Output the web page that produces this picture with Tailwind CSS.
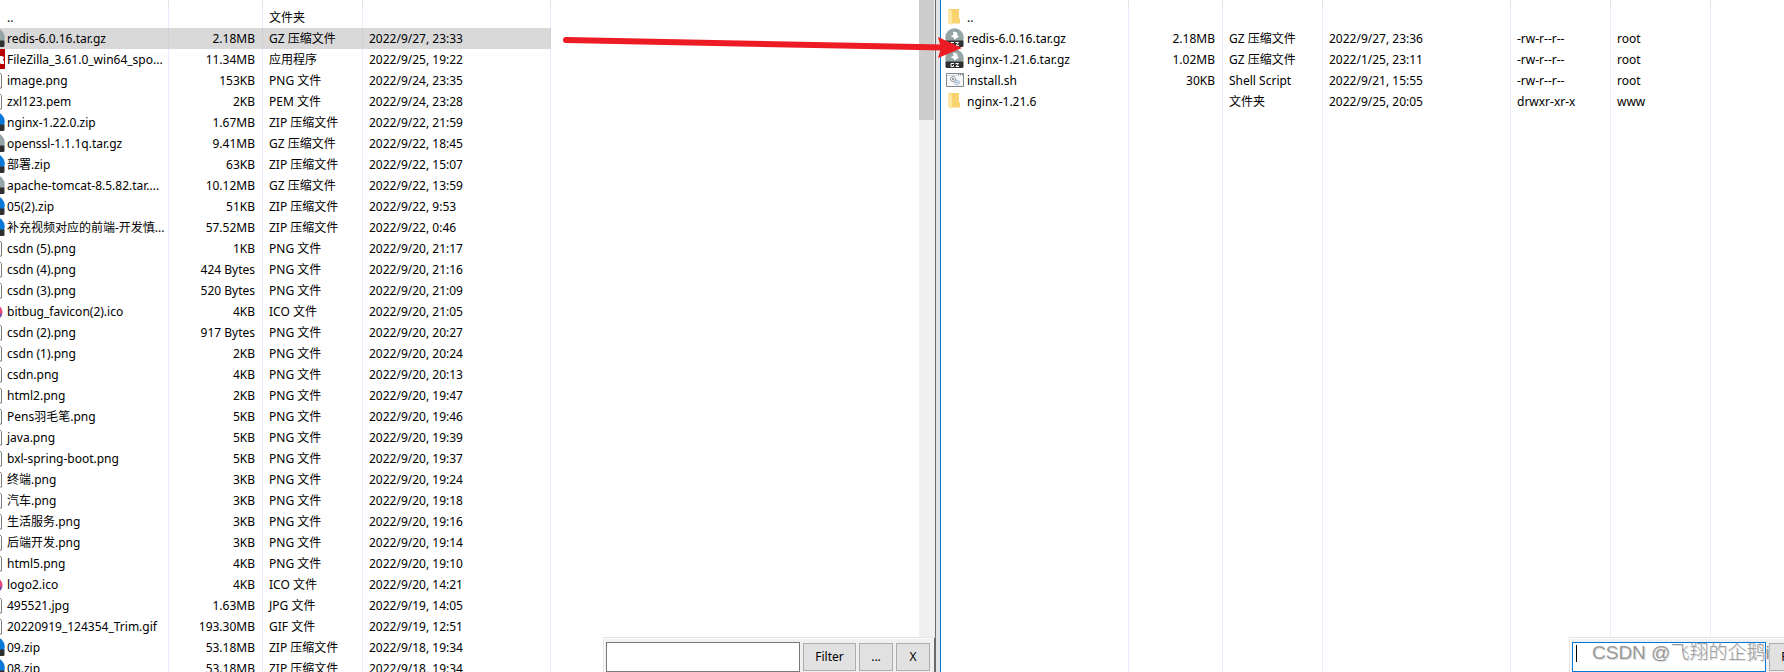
<!DOCTYPE html>
<html lang="zh-CN">
<head>
<meta charset="utf-8">
<title>File transfer</title>
<script src="https://cdn.jsdelivr.net/npm/@tailwindcss/browser@4"></script>
</head>
<body class="relative flex h-screen overflow-hidden bg-white font-['Noto_Sans','Noto_Sans_CJK_SC',sans-serif] text-xs text-black">

<svg class="hidden" aria-hidden="true">
  <symbol id="gz" viewBox="0 0 19 21"><circle cx="9.500" cy="9.500" r="9.300" fill="#95a5a5"/><path d="M8 3.500l4 1 .5 3 1.500 1-4.500 3-1-2-3-1.500 3-1z" fill="#fff"/><path d="M.5 12.500h18v5q0 1.500-1.500 1.500H2q-1.500 0-1.500-1.500z" fill="#303030"/><path d="M9 14.500H6v3h2.500v-1.500M10.500 14.500H13.500l-2.500 3h3" fill="none" stroke="#fff"/></symbol>
  <symbol id="zip" viewBox="0 0 19 21"><circle cx="9.500" cy="9.500" r="9.300" fill="#0a78d7"/><path d="M.5 12.500h18v5q0 1.500-1.500 1.500H2q-1.500 0-1.500-1.500z" fill="#303030"/></symbol>
  <symbol id="fz" viewBox="0 0 19 21"><path d="M0 0h19v20H0z" fill="#b80000"/><path d="M12 7h4l2 1-1 3 1 1v3h-3l-3-2z" fill="#fff"/></symbol>
  <symbol id="doc" viewBox="0 0 19 21"><path d="M4.500 2.500h9l2 2v13.500h-11z" fill="#fff" stroke="#7d7d7d"/></symbol>
  <symbol id="ico" viewBox="0 0 19 21"><circle cx="9" cy="11" r="7.500" fill="#e8487a"/><path d="M9 18.500a7.500 7.500 0 0 0 7.300-6L9 13z" fill="#6a4fb0"/></symbol>
  <symbol id="folder" viewBox="0 0 19 21"><path d="M4 2h10v9l1 1v4.500H4z" fill="#f8d36f"/><path d="M3 2l4 2v14l-4-2z" fill="#ffe9a2"/></symbol>
  <symbol id="script" viewBox="0 0 19 21"><path d="M1.500 3.500h17v13h-17z" fill="#f7f7f7" stroke="#7f878c"/><path d="M2 5.500h16" stroke="#d5d9dc"/><path d="M13 4.500h1M15 4.500h1M17 4.500h1" stroke="#7f878c"/><g fill="none" stroke="#7b7b7b"><circle cx="8" cy="9" r="2.500" stroke-dasharray="1.500 .5"/><circle cx="8" cy="9" r=".7"/></g><g fill="none" stroke="#7ea3c4"><circle cx="12" cy="12.500" r="2.300" stroke-dasharray="1.500 .5"/><circle cx="12" cy="12.500" r=".6"/></g></symbol>
</svg>

<section aria-label="Local files" class="relative flex w-[940px] shrink-0 overflow-hidden">
  <div class="min-w-0 flex-1 overflow-hidden">
    <table class="w-[551px] table-fixed border-separate border-spacing-0 whitespace-nowrap [&_td]:h-[21px] [&_td]:border-r [&_td]:border-[#e6effb] [&_td]:p-0 [&_td]:pl-[6px] [&_td]:leading-5 [&_td:first-child]:pl-[7px] [&_td:nth-child(2)]:pr-[7px] [&_td:nth-child(2)]:text-right [&_th]:h-[7px] [&_th]:border-r [&_th]:border-[#e2e2e2] [&_th]:p-0 [&_td]:relative [&_svg]:absolute [&_svg]:left-0 [&_svg]:top-0 [&_svg]:h-[21px] [&_svg]:w-[5px]">
      <colgroup><col class="w-[169px]"><col class="w-[94px]"><col class="w-[100px]"><col class="w-[188px]"></colgroup>
      <thead><tr><th aria-label="Filename"></th><th aria-label="Filesize"></th><th aria-label="Filetype"></th><th aria-label="Last modified"></th></tr></thead>
      <tbody>
        <tr><td>..</td><td></td><td>文件夹</td><td></td></tr>
        <tr class="bg-[#d9d9d9] [&>td]:border-[#cbd3da]!"><td><svg viewBox="14 0 5 21"><use href="#gz" width="19" height="21"/></svg>redis-6.0.16.tar.gz</td><td>2.18MB</td><td>GZ 压缩文件</td><td>2022/9/27, 23:33</td></tr>
        <tr><td><svg viewBox="14 0 5 21"><use href="#fz" width="19" height="21"/></svg>FileZilla_3.61.0_win64_spo...</td><td>11.34MB</td><td>应用程序</td><td>2022/9/25, 19:22</td></tr>
        <tr><td><svg viewBox="14 0 5 21"><use href="#doc" width="19" height="21"/></svg>image.png</td><td>153KB</td><td>PNG 文件</td><td>2022/9/24, 23:35</td></tr>
        <tr><td><svg viewBox="14 0 5 21"><use href="#doc" width="19" height="21"/></svg>zxl123.pem</td><td>2KB</td><td>PEM 文件</td><td>2022/9/24, 23:28</td></tr>
        <tr><td><svg viewBox="14 0 5 21"><use href="#zip" width="19" height="21"/></svg>nginx-1.22.0.zip</td><td>1.67MB</td><td>ZIP 压缩文件</td><td>2022/9/22, 21:59</td></tr>
        <tr><td><svg viewBox="14 0 5 21"><use href="#gz" width="19" height="21"/></svg>openssl-1.1.1q.tar.gz</td><td>9.41MB</td><td>GZ 压缩文件</td><td>2022/9/22, 18:45</td></tr>
        <tr><td><svg viewBox="14 0 5 21"><use href="#zip" width="19" height="21"/></svg>部署.zip</td><td>63KB</td><td>ZIP 压缩文件</td><td>2022/9/22, 15:07</td></tr>
        <tr><td><svg viewBox="14 0 5 21"><use href="#gz" width="19" height="21"/></svg>apache-tomcat-8.5.82.tar....</td><td>10.12MB</td><td>GZ 压缩文件</td><td>2022/9/22, 13:59</td></tr>
        <tr><td><svg viewBox="14 0 5 21"><use href="#zip" width="19" height="21"/></svg>05(2).zip</td><td>51KB</td><td>ZIP 压缩文件</td><td>2022/9/22, 9:53</td></tr>
        <tr><td><svg viewBox="14 0 5 21"><use href="#zip" width="19" height="21"/></svg>补充视频对应的前端-开发慎...</td><td>57.52MB</td><td>ZIP 压缩文件</td><td>2022/9/22, 0:46</td></tr>
        <tr><td><svg viewBox="14 0 5 21"><use href="#doc" width="19" height="21"/></svg>csdn (5).png</td><td>1KB</td><td>PNG 文件</td><td>2022/9/20, 21:17</td></tr>
        <tr><td><svg viewBox="14 0 5 21"><use href="#doc" width="19" height="21"/></svg>csdn (4).png</td><td>424 Bytes</td><td>PNG 文件</td><td>2022/9/20, 21:16</td></tr>
        <tr><td><svg viewBox="14 0 5 21"><use href="#doc" width="19" height="21"/></svg>csdn (3).png</td><td>520 Bytes</td><td>PNG 文件</td><td>2022/9/20, 21:09</td></tr>
        <tr><td><svg viewBox="14 0 5 21"><use href="#ico" width="19" height="21"/></svg>bitbug_favicon(2).ico</td><td>4KB</td><td>ICO 文件</td><td>2022/9/20, 21:05</td></tr>
        <tr><td><svg viewBox="14 0 5 21"><use href="#doc" width="19" height="21"/></svg>csdn (2).png</td><td>917 Bytes</td><td>PNG 文件</td><td>2022/9/20, 20:27</td></tr>
        <tr><td><svg viewBox="14 0 5 21"><use href="#doc" width="19" height="21"/></svg>csdn (1).png</td><td>2KB</td><td>PNG 文件</td><td>2022/9/20, 20:24</td></tr>
        <tr><td><svg viewBox="14 0 5 21"><use href="#doc" width="19" height="21"/></svg>csdn.png</td><td>4KB</td><td>PNG 文件</td><td>2022/9/20, 20:13</td></tr>
        <tr><td><svg viewBox="14 0 5 21"><use href="#doc" width="19" height="21"/></svg>html2.png</td><td>2KB</td><td>PNG 文件</td><td>2022/9/20, 19:47</td></tr>
        <tr><td><svg viewBox="14 0 5 21"><use href="#doc" width="19" height="21"/></svg>Pens羽毛笔.png</td><td>5KB</td><td>PNG 文件</td><td>2022/9/20, 19:46</td></tr>
        <tr><td><svg viewBox="14 0 5 21"><use href="#doc" width="19" height="21"/></svg>java.png</td><td>5KB</td><td>PNG 文件</td><td>2022/9/20, 19:39</td></tr>
        <tr><td><svg viewBox="14 0 5 21"><use href="#doc" width="19" height="21"/></svg>bxl-spring-boot.png</td><td>5KB</td><td>PNG 文件</td><td>2022/9/20, 19:37</td></tr>
        <tr><td><svg viewBox="14 0 5 21"><use href="#doc" width="19" height="21"/></svg>终端.png</td><td>3KB</td><td>PNG 文件</td><td>2022/9/20, 19:24</td></tr>
        <tr><td><svg viewBox="14 0 5 21"><use href="#doc" width="19" height="21"/></svg>汽车.png</td><td>3KB</td><td>PNG 文件</td><td>2022/9/20, 19:18</td></tr>
        <tr><td><svg viewBox="14 0 5 21"><use href="#doc" width="19" height="21"/></svg>生活服务.png</td><td>3KB</td><td>PNG 文件</td><td>2022/9/20, 19:16</td></tr>
        <tr><td><svg viewBox="14 0 5 21"><use href="#doc" width="19" height="21"/></svg>后端开发.png</td><td>3KB</td><td>PNG 文件</td><td>2022/9/20, 19:14</td></tr>
        <tr><td><svg viewBox="14 0 5 21"><use href="#doc" width="19" height="21"/></svg>html5.png</td><td>4KB</td><td>PNG 文件</td><td>2022/9/20, 19:10</td></tr>
        <tr><td><svg viewBox="14 0 5 21"><use href="#ico" width="19" height="21"/></svg>logo2.ico</td><td>4KB</td><td>ICO 文件</td><td>2022/9/20, 14:21</td></tr>
        <tr><td><svg viewBox="14 0 5 21"><use href="#doc" width="19" height="21"/></svg>495521.jpg</td><td>1.63MB</td><td>JPG 文件</td><td>2022/9/19, 14:05</td></tr>
        <tr><td><svg viewBox="14 0 5 21"><use href="#doc" width="19" height="21"/></svg>20220919_124354_Trim.gif</td><td>193.30MB</td><td>GIF 文件</td><td>2022/9/19, 12:51</td></tr>
        <tr><td><svg viewBox="14 0 5 21"><use href="#zip" width="19" height="21"/></svg>09.zip</td><td>53.18MB</td><td>ZIP 压缩文件</td><td>2022/9/18, 19:34</td></tr>
        <tr><td><svg viewBox="14 0 5 21"><use href="#zip" width="19" height="21"/></svg>08.zip</td><td>53.18MB</td><td>ZIP 压缩文件</td><td>2022/9/18, 19:34</td></tr>
      </tbody>
    </table>
  </div>
  <!-- scroll bar and splitter -->
  <div class="w-4 bg-[#f0f0f0]"><div class="h-[120px] w-[15px] bg-[#cdcdcd]"></div></div>
  <div class="w-px bg-[#696969]"></div>
  <div class="w-1 bg-[#e3e3e3]"></div>
  <form class="absolute right-1 bottom-0 flex h-[35px] w-[333px] gap-[3px] border-t border-r-2 border-l border-t-[#e3e3e3] border-r-[#696969] border-l-[#e3e3e3] bg-[#f0f0f0] pt-1 pl-[2px] shadow-[inset_1px_1px_0_#fff]">
    <input aria-label="Filter files" type="text" class="h-[30px] w-[194px] border border-[#7a7a7a] bg-white px-1 outline-none">
    <button type="button" class="mt-px h-7 w-[53px] border border-[#adadad] bg-[#e1e1e1]">Filter</button>
    <button type="button" class="mt-px h-7 w-[34px] border border-[#adadad] bg-[#e1e1e1]">...</button>
    <button type="button" class="mt-px h-7 w-[34px] border border-[#adadad] bg-[#e1e1e1]">X</button>
  </form>
</section>

<section aria-label="Remote files" class="relative min-w-0 flex-1 overflow-hidden border-l border-[#0078d7]">
  <table class="h-full w-[770px] table-fixed border-separate border-spacing-0 whitespace-nowrap [&_td]:relative [&_td]:h-[21px] [&_td]:border-r [&_td]:border-[#e6effb] [&_td]:p-0 [&_td]:pl-[6px] [&_td]:leading-5 [&_td:first-child]:pl-[26px] [&_td:nth-child(2)]:pr-[7px] [&_td:nth-child(2)]:text-right [&_th]:h-[7px] [&_th]:border-r [&_th]:border-[#e2e2e2] [&_th]:p-0 [&_svg]:absolute [&_svg]:top-0 [&_svg]:left-1 [&_svg]:h-[21px] [&_svg]:w-[19px]">
    <colgroup><col class="w-[188px]"><col class="w-[94px]"><col class="w-[100px]"><col class="w-[188px]"><col class="w-[100px]"><col class="w-[100px]"></colgroup>
    <thead><tr><th aria-label="Filename"></th><th aria-label="Filesize"></th><th aria-label="Filetype"></th><th aria-label="Last modified"></th><th aria-label="Permissions"></th><th aria-label="Owner"></th></tr></thead>
    <tbody>
      <tr><td><svg><use href="#folder"/></svg>..</td><td></td><td></td><td></td><td></td><td></td></tr>
      <tr><td><svg><use href="#gz"/></svg>redis-6.0.16.tar.gz</td><td>2.18MB</td><td>GZ 压缩文件</td><td>2022/9/27, 23:36</td><td>-rw-r--r--</td><td>root</td></tr>
      <tr><td><svg><use href="#gz"/></svg>nginx-1.21.6.tar.gz</td><td>1.02MB</td><td>GZ 压缩文件</td><td>2022/1/25, 23:11</td><td>-rw-r--r--</td><td>root</td></tr>
      <tr><td><svg><use href="#script"/></svg>install.sh</td><td>30KB</td><td>Shell Script</td><td>2022/9/21, 15:55</td><td>-rw-r--r--</td><td>root</td></tr>
      <tr><td><svg><use href="#folder"/></svg>nginx-1.21.6</td><td></td><td>文件夹</td><td>2022/9/25, 20:05</td><td>drwxr-xr-x</td><td>www</td></tr>
      <tr class="[&>td]:h-auto!"><td></td><td></td><td></td><td></td><td></td><td></td></tr>
    </tbody>
  </table>
  <form class="absolute right-0 bottom-0 flex h-[35px] w-[215px] gap-[3px] overflow-hidden border-t border-l border-[#e3e3e3] bg-[#f0f0f0] pt-1 pl-[2px] shadow-[inset_1px_1px_0_#fff]">
    <div class="relative shrink-0">
      <input aria-label="Filter remote files" type="text" class="h-[30px] w-[194px] border border-[#0078d7] bg-white px-1 outline-none">
      <span class="absolute top-[3px] left-1 h-[17px] w-px bg-black"></span>
    </div>
    <button type="button" class="mt-px h-7 w-[53px] shrink-0 border border-[#adadad] bg-[#e1e1e1]">Filter</button>
    <span class="absolute top-[3px] left-[22px] font-['Liberation_Sans','Noto_Sans_CJK_SC',sans-serif] text-[19px] leading-6 font-light whitespace-nowrap text-[#999] [text-shadow:1px_1px_0_#ddd]">CSDN @飞翔的企鹅i</span>
  </form>
</section>

<!-- upload arrow -->
<svg class="pointer-events-none absolute top-[30px] left-[560px]" width="410" height="32" viewBox="0 0 410 32" aria-hidden="true"><path d="M6 10L384 17.500" stroke="#ed1c24" stroke-width="6" stroke-linecap="round"/><path d="M378 7l24 11-24 10 3-10z" fill="#ed1c24"/></svg>
</body>
</html>
